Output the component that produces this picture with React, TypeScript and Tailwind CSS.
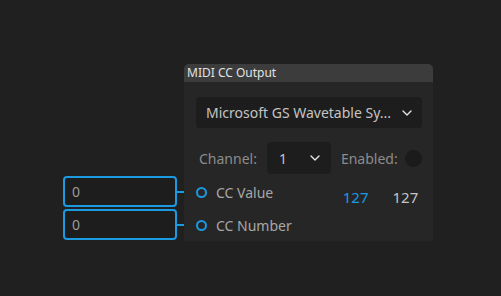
import { ChevronDown } from "lucide-react";

const font = { fontFamily: '"Noto Sans", "Open Sans", sans-serif' };

function Port({ label }: { label: string }) {
  return (
    <div className="flex h-[33px] items-center gap-[9px]">
      <span className="h-[11px] w-[11px] rounded-full border-2 border-[#1a9ae0]" />
      <span className="text-[14px] text-[#a8a8a8]">{label}</span>
    </div>
  );
}

function ValueBox({ value }: { value: string }) {
  return (
    <div className="flex h-[31px] w-[114px] items-center rounded-[4px] border-2 border-[#1a9ae0] bg-[#1d1d1d] pl-[7px] text-[14px] text-[#9a9a9a]">
      {value}
    </div>
  );
}

export default function App() {
  return (
    <div className="relative h-[296px] w-[501px] overflow-hidden bg-[#202020]" style={font}>
      {/* wires */}
      <svg className="absolute left-0 top-0" width="501" height="296">
        <line x1="177" y1="192" x2="197" y2="192" stroke="#1a9ae0" strokeWidth="2" />
        <line x1="177" y1="225" x2="197" y2="225" stroke="#1a9ae0" strokeWidth="2" />
      </svg>

      <div className="absolute left-[63px] top-[176px] flex flex-col gap-[2px]">
        <ValueBox value="0" />
        <ValueBox value="0" />
      </div>

      <div className="absolute left-[184px] top-[64px] w-[249px]">
        <div className="flex h-[18px] items-center rounded-t-[5px] bg-[#3c3c3c] px-[3px] text-[12px] text-[#e2e2e2]">
          MIDI CC Output
        </div>
        <div className="h-[159px] bg-[#262626] pl-[12px] pr-[11px] pt-[15px]">
          <div className="flex h-[31px] items-center justify-between rounded-[4px] bg-[#1d1d1d] pl-[10px] pr-[7px] text-[14px] text-[#c4c4c4]">
            <span>Microsoft GS Wavetable Sy...</span>
            <ChevronDown size={16} strokeWidth={2} color="#e6e6e6" />
          </div>
          <div className="mt-[14px] flex h-[32px] items-center text-[14px] text-[#8c8c8c]">
            <span className="ml-[3px]">Channel:</span>
            <div className="ml-[10px] flex h-[32px] w-[64px] items-center justify-between rounded-[4px] bg-[#1d1d1d] pl-[12px] pr-[8px] text-[#c4c4c4]">
              <span>1</span>
              <ChevronDown size={16} strokeWidth={2} color="#e6e6e6" />
            </div>
            <span className="ml-[10px]">Enabled:</span>
            <span className="ml-[7px] h-[17px] w-[17px] rounded-full bg-[#1b1b1b]" />
          </div>
          <div className="mt-[2px] flex">
            <div className="flex flex-col">
              <Port label="CC Value" />
              <Port label="CC Number" />
            </div>
            <div className="ml-[51px] flex h-[33px] items-center gap-[24px] pt-[10px] text-[15px]">
              <span className="text-[#1a9ae0]">127</span>
              <span className="text-[#c4c4c4]">127</span>
            </div>
          </div>
        </div>
      </div>
    </div>
  );
}
